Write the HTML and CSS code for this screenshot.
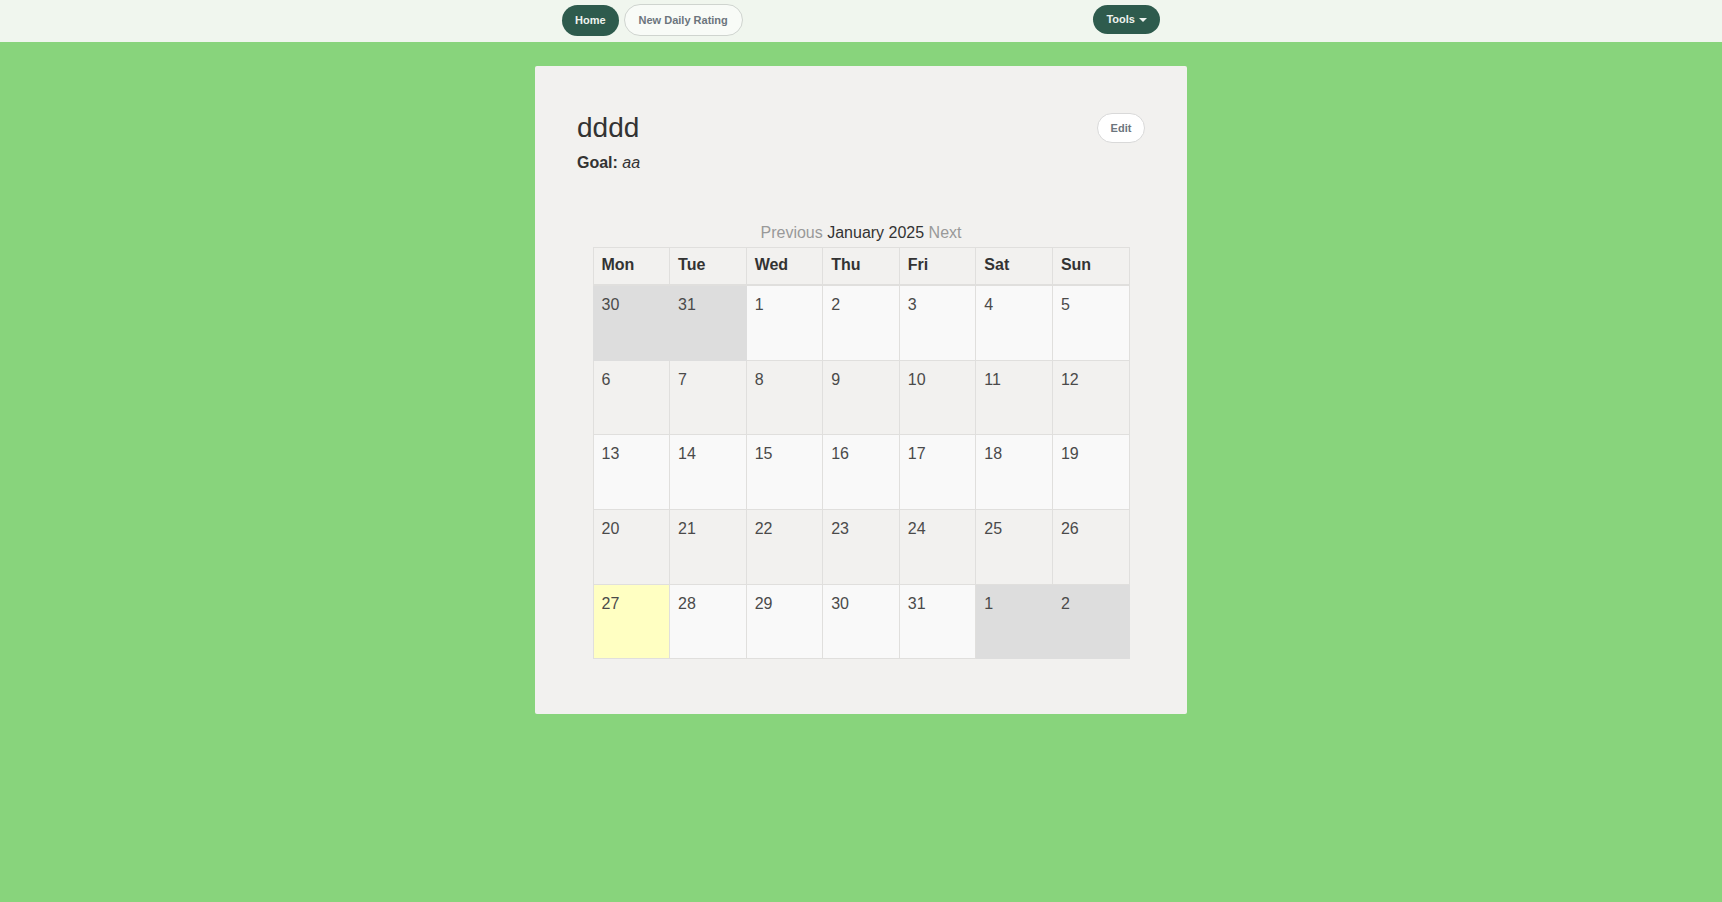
FILE: index.html
```html
<!DOCTYPE html>
<html>
<head>
<meta charset="utf-8">
<title>dddd</title>
<link rel="stylesheet" href="styles.css">
</head>
<body>
<nav class="navbar">
  <div class="nav-inner">
    <div class="nav-left">
      <a class="pill pill-dark home">Home</a>
      <a class="pill pill-light">New Daily Rating</a>
    </div>
    <a class="pill pill-dark tools">Tools <span class="caret"></span></a>
  </div>
</nav>
<main class="card">
  <div class="card-head">
    <h1 class="title">dddd</h1>
    <a class="edit-btn">Edit</a>
  </div>
  <p class="goal"><strong>Goal:</strong> <em>aa</em></p>
  <div class="cal-caption"><span class="muted">Previous</span> January 2025 <span class="muted">Next</span></div>
  <table class="calendar">
    <thead>
      <tr><th>Mon</th><th>Tue</th><th>Wed</th><th>Thu</th><th>Fri</th><th>Sat</th><th>Sun</th></tr>
    </thead>
    <tbody>
      <tr class="odd">
        <td class="other"><div class="day">30</div></td>
        <td class="other"><div class="day">31</div></td>
        <td><div class="day">1</div></td>
        <td><div class="day">2</div></td>
        <td><div class="day">3</div></td>
        <td><div class="day">4</div></td>
        <td><div class="day">5</div></td>
      </tr>
      <tr>
        <td><div class="day">6</div></td>
        <td><div class="day">7</div></td>
        <td><div class="day">8</div></td>
        <td><div class="day">9</div></td>
        <td><div class="day">10</div></td>
        <td><div class="day">11</div></td>
        <td><div class="day">12</div></td>
      </tr>
      <tr class="odd">
        <td><div class="day">13</div></td>
        <td><div class="day">14</div></td>
        <td><div class="day">15</div></td>
        <td><div class="day">16</div></td>
        <td><div class="day">17</div></td>
        <td><div class="day">18</div></td>
        <td><div class="day">19</div></td>
      </tr>
      <tr>
        <td><div class="day">20</div></td>
        <td><div class="day">21</div></td>
        <td><div class="day">22</div></td>
        <td><div class="day">23</div></td>
        <td><div class="day">24</div></td>
        <td><div class="day">25</div></td>
        <td><div class="day">26</div></td>
      </tr>
      <tr class="odd">
        <td class="today"><div class="day">27</div></td>
        <td><div class="day">28</div></td>
        <td><div class="day">29</div></td>
        <td><div class="day">30</div></td>
        <td><div class="day">31</div></td>
        <td class="other"><div class="day">1</div></td>
        <td class="other"><div class="day">2</div></td>
      </tr>
    </tbody>
  </table>
</main>
</body>
</html>
```

FILE: styles.css
```css
html, body {
  margin: 0;
  padding: 0;
}
body {
  background: #88d47c;
  font-family: "Liberation Sans", Arial, sans-serif;
  color: #333;
  min-height: 902px;
}
.navbar {
  background: #f0f6ee;
  height: 42px;
}
.nav-inner {
  width: 598px;
  margin: 0 auto;
  display: flex;
  justify-content: space-between;
  align-items: flex-start;
  padding-top: 4px;
}
.nav-left {
  display: flex;
  gap: 5px;
  align-items: flex-start;
}
.pill {
  display: inline-block;
  font-size: 11px;
  font-weight: bold;
  border-radius: 16px;
  padding: 6px 13px;
  line-height: 19px;
  cursor: pointer;
}
.pill-dark {
  background: #2e5b4d;
  color: #eef3ef;
}
.home {
  margin-top: 1px;
}
.pill-light {
  background: #f8fbf7;
  color: #6c757d;
  border: 1px solid #cfd4cf;
  line-height: 18px;
  padding: 6px 14px;
}
.tools {
  padding: 5px 13px;
  margin-top: 1px;
}
.caret {
  display: inline-block;
  width: 0;
  height: 0;
  border-left: 4px solid transparent;
  border-right: 4px solid transparent;
  border-top: 4px solid #eef3ef;
  vertical-align: middle;
  margin-left: 1px;
}
.card {
  display: block;
  width: 652px;
  box-sizing: border-box;
  margin: 24px auto 0;
  background: #f2f1ef;
  padding: 43px 42px 55px;
  border-radius: 2px;
}
.card-head {
  display: flex;
  justify-content: space-between;
  align-items: flex-start;
}
.title {
  margin: 4px 0 0;
  font-size: 28px;
  font-weight: normal;
  line-height: 1.1;
  color: #333;
}
.edit-btn {
  margin-top: 4px;
  display: inline-block;
  box-sizing: border-box;
  width: 48px;
  height: 30px;
  line-height: 28px;
  text-align: center;
  font-size: 11px;
  font-weight: bold;
  color: #6c757d;
  background: #fff;
  border: 1px solid #d9d9d9;
  border-radius: 15px;
}
.goal {
  margin: 8px 0 0;
  font-size: 16px;
  line-height: 22.4px;
  color: #333;
}
.cal-caption {
  margin-top: 48px;
  text-align: center;
  font-size: 16px;
  line-height: 22.4px;
  color: #333;
}
.muted {
  color: #999;
}
.calendar {
  width: 537px;
  margin: 2px auto 0;
  border-collapse: collapse;
  table-layout: fixed;
  border: 1px solid #e0dfdd;
  font-size: 16px;
  line-height: 22.4px;
  color: #4a4a4a;
}
.calendar th {
  text-align: left;
  font-weight: bold;
  color: #333;
  padding: 6px 8px 8px;
  border: 1px solid #e0dfdd;
  border-bottom: 2px solid #e0dfdd;
}
.calendar td {
  vertical-align: top;
  padding: 8px 8px 8px;
  border: 1px solid #e0dfdd;
}
.calendar tr.odd td {
  background: #f9f9f9;
}
.calendar td.other,
.calendar tr.odd td.other {
  background: #dddddd;
  border-color: #dddddd;
}
.calendar td.today,
.calendar tr.odd td.today {
  background: #ffffc2;
}
.day {
  height: 57.7px;
}
```
